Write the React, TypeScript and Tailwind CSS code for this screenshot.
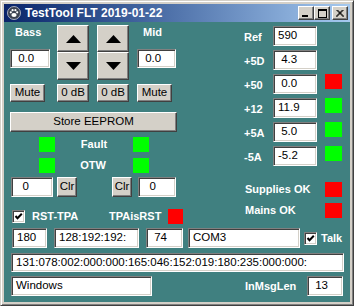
import React from 'react';

function Edit({ text, className }: { text: string; className: string }) {
  return (
    <div
      className={`flex items-center bg-white border border-t-[#808080] border-l-[#808080] border-r-white border-b-white shadow-[inset_1px_1px_0_#404040,inset_-1px_-1px_0_#d4d0c8] pl-[4px] text-[11.5px] text-black whitespace-pre overflow-hidden ${className}`}
    >
      {text}
    </div>
  );
}

function Btn({ children, className }: { children: React.ReactNode; className: string }) {
  return (
    <div
      className={`flex items-center justify-center bg-[#d4d0c8] border border-t-white border-l-white border-r-[#404040] border-b-[#404040] shadow-[inset_-1px_-1px_0_#808080] text-[11.5px] text-black ${className}`}
    >
      {children}
    </div>
  );
}

function Arrow({ up }: { up?: boolean }) {
  return (
    <svg width="15" height="8" viewBox="0 0 15 8">
      {up ? <polygon points="0,8 15,8 7.5,0" fill="#000" /> : <polygon points="0,0 15,0 7.5,8" fill="#000" />}
    </svg>
  );
}

function Check() {
  return (
    <div className="flex items-center justify-center w-[13px] h-[13px] bg-white border border-t-[#808080] border-l-[#808080] border-r-white border-b-white shadow-[inset_1px_1px_0_#404040,inset_-1px_-1px_0_#d4d0c8]">
      <svg width="9" height="9" viewBox="0 0 9 9">
        <polyline points="1.5,4 3.5,6.2 7.8,1.8" fill="none" stroke="#000" strokeWidth="2" />
      </svg>
    </div>
  );
}

function Lamp({ on }: { on: boolean }) {
  return <div className={`w-[17px] h-[15px] ${on ? 'bg-[#00ff00]' : 'bg-[#ff0000]'}`} />;
}

const lbl = 'text-white font-bold text-[11px]';

export default function App() {
  const rails = [
    { name: 'Ref', value: '590', lamp: null },
    { name: '+5D', value: ' 4.3', lamp: null },
    { name: '+50', value: ' 0.0', lamp: false },
    { name: '+12', value: '11.9', lamp: true },
    { name: '+5A', value: ' 5.0', lamp: true },
    { name: '-5A', value: '-5.2', lamp: true },
  ];

  return (
    <div className="w-[354px] h-[306px] bg-[#d4d0c8] border border-t-[#d4d0c8] border-l-[#d4d0c8] border-r-[#404040] border-b-[#404040] shadow-[inset_1px_1px_0_#fff,inset_-1px_-1px_0_#808080] p-[3px] font-['Liberation_Sans',sans-serif] overflow-hidden">
      {/* title bar */}
      <div className="flex items-center h-[18px] bg-linear-to-r from-[#0a246a] to-[#a6caf0]">
        <svg className="ml-[3px]" width="14" height="14" viewBox="0 0 14 14">
          <circle cx="7" cy="7" r="6.5" fill="#3a4150" stroke="#c8ccd6" strokeWidth="0.8" />
          <ellipse cx="7" cy="9" rx="2.6" ry="2" fill="#fff" />
          <circle cx="3.8" cy="6.3" r="1.1" fill="#fff" />
          <circle cx="5.6" cy="4.2" r="1.1" fill="#fff" />
          <circle cx="8.4" cy="4.2" r="1.1" fill="#fff" />
          <circle cx="10.2" cy="6.3" r="1.1" fill="#fff" />
        </svg>
        <span className="ml-[4px] text-white font-bold text-[12px] leading-none">TestTool FLT 2019-01-22</span>
        <div className="ml-auto mr-[2px] flex">
          <Btn className="w-[16px] h-[14px] items-end justify-start">
            <div className="ml-[3px] mb-[2px] w-[6px] h-[2px] bg-black" />
          </Btn>
          <Btn className="w-[16px] h-[14px]">
            <div className="w-[9px] h-[9px] border border-black border-t-2" />
          </Btn>
          <Btn className="ml-[2px] w-[16px] h-[14px]">
            <svg width="8" height="7" viewBox="0 0 8 7">
              <path d="M0.5 0 L7.5 7 M1.5 0 L8 6.5 M7.5 0 L0.5 7 M6.5 0 L0 6.5" stroke="#000" strokeWidth="1" />
            </svg>
          </Btn>
        </div>
      </div>

      {/* client area */}
      <div className="w-[346px] h-[280px] bg-[#408080]">
        <div className="flex pl-[6px] pt-[3px]">
          {/* left column */}
          <div className="flex flex-col w-[173px]">
            <div className="flex h-[55px]">
              <div className="flex flex-col w-[40px]">
                <div className={`h-[24px] pl-[5px] leading-[14px] ${lbl}`}>Bass</div>
                <Edit text=" 0.0" className="w-[40px] h-[19px]" />
              </div>
              <div className="ml-[7px] flex flex-col w-[32px]">
                <Btn className="h-[27px]"><Arrow up /></Btn>
                <Btn className="h-[28px]"><Arrow /></Btn>
              </div>
              <div className="ml-[8px] flex flex-col w-[32px]">
                <Btn className="h-[27px]"><Arrow up /></Btn>
                <Btn className="h-[28px]"><Arrow /></Btn>
              </div>
              <div className="ml-[8px] flex flex-col w-[39px]">
                <div className={`h-[24px] pl-[6px] leading-[14px] ${lbl}`}>Mid</div>
                <Edit text=" 0.0" className="w-[39px] h-[19px]" />
              </div>
            </div>

            <div className="mt-[4px] flex h-[18px]">
              <Btn className="w-[35px]">Mute</Btn>
              <Btn className="ml-[12px] w-[32px]">0 dB</Btn>
              <Btn className="ml-[8px] w-[32px]">0 dB</Btn>
              <Btn className="ml-[8px] w-[35px]">Mute</Btn>
            </div>

            <Btn className="mt-[10px] w-[167px] h-[20px]">Store EEPROM</Btn>

            <div className="mt-[5px] flex items-center h-[15px]">
              <div className="ml-[29px] w-[16px] h-[15px] bg-[#00ff00]" />
              <div className={`w-[78px] text-center ${lbl}`}>Fault</div>
              <div className="w-[16px] h-[15px] bg-[#00ff00]" />
            </div>
            <div className="mt-[6px] flex items-center h-[15px]">
              <div className="ml-[29px] w-[16px] h-[15px] bg-[#00ff00]" />
              <div className={`w-[76px] text-center ${lbl}`}>OTW</div>
              <div className="ml-[2px] w-[16px] h-[15px] bg-[#00ff00]" />
            </div>

            <div className="mt-[4px] flex h-[20px]">
              <Edit text="  0" className="ml-[1px] w-[42px]" />
              <Btn className="ml-[4px] w-[20px]">Clr</Btn>
              <Btn className="ml-[35px] w-[20px]">Clr</Btn>
              <Edit text="  0" className="ml-[6px] w-[38px]" />
            </div>

            <div className="mt-[12px] flex items-center h-[15px]">
              <div className="ml-[2px]"><Check /></div>
              <div className={`ml-[7px] w-[77px] ${lbl}`}>RST-TPA</div>
              <div className={`w-[59px] ${lbl}`}>TPAisRST</div>
              <div className="w-[15px] h-[15px] bg-[#ff0000]" />
            </div>
          </div>

          {/* right column */}
          <div className="ml-[60px] flex flex-col w-[100px] pt-[1px]">
            {rails.map((r, i) => (
              <div key={r.name} className={`flex items-start h-[20px] ${i > 0 ? 'mt-[4px]' : ''}`}>
                <div className={`w-[30px] h-[20px] flex items-center pt-[2px] pl-[1px] ${lbl}`}>{r.name}</div>
                <Edit text={r.value} className="w-[44px] h-[20px]" />
                {r.lamp !== null && <div className="ml-[8px]"><Lamp on={r.lamp} /></div>}
              </div>
            ))}
            <div className="mt-[16px] flex items-center h-[15px]">
              <div className={`w-[82px] pl-[2px] ${lbl}`}>Supplies OK</div>
              <Lamp on={false} />
            </div>
            <div className="mt-[6px] flex items-center h-[15px]">
              <div className={`w-[82px] pl-[2px] ${lbl}`}>Mains OK</div>
              <Lamp on={false} />
            </div>
          </div>
        </div>

        <div className="mt-[4px] flex items-center h-[20px]">
          <Edit text="180" className="ml-[8px] w-[35px] h-[20px]" />
          <Edit text="128:192:192:" className="ml-[7px] w-[85px] h-[20px]" />
          <Edit text=" 74" className="ml-[7px] w-[37px] h-[20px]" />
          <Edit text="COM3" className="ml-[5px] w-[112px] h-[20px]" />
          <div className="ml-[4px]"><Check /></div>
          <div className={`ml-[4px] ${lbl}`}>Talk</div>
        </div>

        <Edit text="131:078:002:000:000:165:046:152:019:180:235:000:000:" className="mt-[5px] ml-[7px] w-[333px] h-[19px]" />

        <div className="mt-[4px] flex items-center h-[20px]">
          <Edit text="Windows" className="ml-[7px] w-[141px] h-[20px]" />
          <div className={`ml-[93px] w-[62px] ${lbl}`}>InMsgLen</div>
          <Edit text=" 13" className="w-[36px] h-[20px]" />
        </div>
      </div>
    </div>
  );
}
